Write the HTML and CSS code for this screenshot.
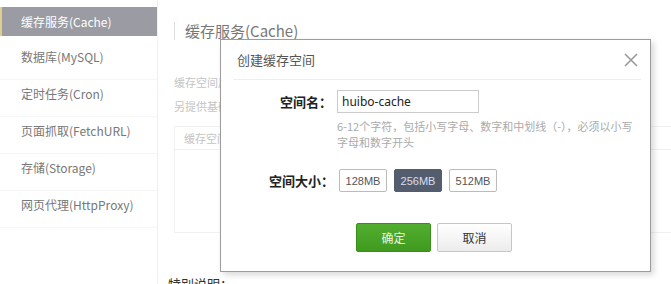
FILE: index.html
```html
<!DOCTYPE html>
<html lang="zh-CN">
<head>
    <meta charset="UTF-8">
    <title>缓存服务(Cache)</title>
    <link rel="stylesheet" href="styles.css">
</head>
<body>

    <div class="page">
        <div class="sidebar">
            <a class="nav-item active" href="#">缓存服务(Cache)</a>
            <a class="nav-item" href="#">数据库(MySQL)</a>
            <a class="nav-item" href="#">定时任务(Cron)</a>
            <a class="nav-item" href="#">页面抓取(FetchURL)</a>
            <a class="nav-item" href="#">存储(Storage)</a>
            <a class="nav-item" href="#">网页代理(HttpProxy)</a>
        </div>

        <div class="main">
            <h2 class="title">缓存服务(Cache)</h2>
            <p class="desc">缓存空间用于存放临时数据</p>
            <p class="desc">另提供基础的监控功能</p>
            <div class="table">
                <div class="table-head">缓存空间名称</div>
                <div class="table-body"></div>
            </div>
            <p class="note">特别说明：</p>
        </div>
    </div>

    <div class="dialog">
        <div class="dialog-head">
            <h3>创建缓存空间</h3>
            <a href="#" class="close">
                <svg width="14" height="14" viewBox="0 0 14 14">
                    <path d="M1 1L13 13M13 1L1 13" stroke="#9a9a9a" stroke-width="1.6" fill="none"/>
                </svg>
            </a>
        </div>
        <div class="dialog-body">
            <div class="form-row">
                <label>空间名：</label>
                <div class="field">
                    <input type="text" class="name-input" value="huibo-cache">
                    <p class="hint">6-12个字符，包括小写字母、数字和中划线（-），必须以小写字母和数字开头</p>
                </div>
            </div>
            <div class="form-row size-row">
                <label>空间大小：</label>
                <div class="sizes">
                    <button class="size">128MB</button>
                    <button class="size selected">256MB</button>
                    <button class="size">512MB</button>
                </div>
            </div>
            <div class="actions">
                <button class="btn btn-ok">确定</button>
                <button class="btn btn-cancel">取消</button>
            </div>
        </div>
    </div>

</body>
</html>
```

FILE: styles.css
```css
body {
    margin: 0;
    font-family: "Noto Sans CJK SC", "Noto Sans", sans-serif;
    background: #fff;
    color: #333;
    font-size: 12px;
    overflow: hidden;
}

.page {
    display: flex;
    height: 284px;
}

.sidebar {
    width: 157px;
    padding-top: 7px;
    border-right: 1px solid #f0f0f0;
    flex-shrink: 0;
}

.nav-item {
    display: block;
    height: 36px;
    line-height: 28px;
    padding-left: 21px;
    color: #777;
    text-decoration: none;
    border-bottom: 1px solid #f6f6f6;
    font-size: 12px;
}

.nav-item.active {
    height: 29px;
    margin-bottom: 7px;
    background: #9a9ba3;
    color: #fff;
    border-left: 2px solid #e0cf8a;
    padding-left: 19px;
    line-height: 29px;
    border-bottom: none;
}

.main {
    flex: 1;
    padding-left: 16px;
    padding-top: 22px;
}

.title {
    margin: 0;
    font-weight: normal;
    font-size: 15px;
    color: #777;
    line-height: 18px;
    border-left: 1px solid #ddd;
    padding-left: 10px;
}

.desc {
    margin: 0;
    color: #c4c4c4;
    font-size: 11px;
    line-height: 24px;
}

.desc:first-of-type {
    margin-top: 30px;
}

.table {
    margin-top: 8px;
    border: 1px solid #f0f0f0;
    border-right: none;
}

.table-head {
    height: 22px;
    line-height: 22px;
    padding-left: 9px;
    color: #c4c4c4;
    font-size: 11px;
    border-bottom: 1px solid #f0f0f0;
}

.table-body {
    height: 82px;
}

.note {
    margin: 41px 0 0 -6px;
    font-size: 13px;
    color: #333;
}

.dialog {
    position: absolute;
    left: 220px;
    top: 39px;
    width: 429px;
    height: 231px;
    background: #fff;
    border: 1px solid #9c9c9c;
    box-shadow: 3px 3px 6px rgba(0, 0, 0, 0.15);
}

.dialog-head {
    display: flex;
    justify-content: space-between;
    align-items: center;
    margin: 0 9px 0 12px;
    height: 39px;
    border-bottom: 1px solid #eee;
}

.dialog-head h3 {
    margin: 0;
    font-weight: normal;
    font-size: 13px;
    color: #555;
    padding-left: 4px;
}

.close {
    display: flex;
    margin-right: 3px;
}

.form-row {
    display: flex;
}

.form-row label {
    width: 111px;
    flex-shrink: 0;
    text-align: right;
    font-weight: bold;
    font-size: 13px;
    color: #222;
    line-height: 24px;
}

.dialog-body {
    padding-top: 10px;
}

.field {
    padding-left: 5px;
}

.name-input {
    display: block;
    width: 132px;
    height: 21px;
    border: 1px solid #ccc;
    padding: 0 4px;
    margin: 0;
    font-family: "Noto Sans", sans-serif;
    font-size: 12px;
    color: #222;
}

.hint {
    margin: 5px 0 0 0;
    width: 306px;
    color: #aaa;
    font-size: 11px;
    line-height: 16px;
}

.size-row {
    margin-top: 19px;
}

.size-row label {
    width: 113px;
}

.sizes {
    display: flex;
    gap: 7px;
    padding-left: 5px;
}

.size {
    width: 48px;
    height: 23px;
    border: 1px solid #bbb;
    background: #fff;
    font-family: "Liberation Sans", sans-serif;
    font-size: 11px;
    color: #555;
    padding: 0;
    border-radius: 2px;
}

.size.selected {
    background: #535d6d;
    border-color: #535d6d;
    color: #dde;
}

.actions {
    display: flex;
    justify-content: center;
    gap: 6px;
    margin-top: 30px;
    padding-right: 3px;
}

.btn {
    width: 75px;
    height: 29px;
    font-size: 12px;
    font-family: "Noto Sans CJK SC", sans-serif;
    border-radius: 2px;
    cursor: pointer;
}

.btn-ok {
    background: linear-gradient(#52ae2f, #3f9a1f);
    border: 1px solid #3a8e1c;
    color: #e8f6e0;
}

.btn-cancel {
    background: linear-gradient(#fff, #ececec);
    border: 1px solid #c6c6c6;
    color: #333;
}
```
